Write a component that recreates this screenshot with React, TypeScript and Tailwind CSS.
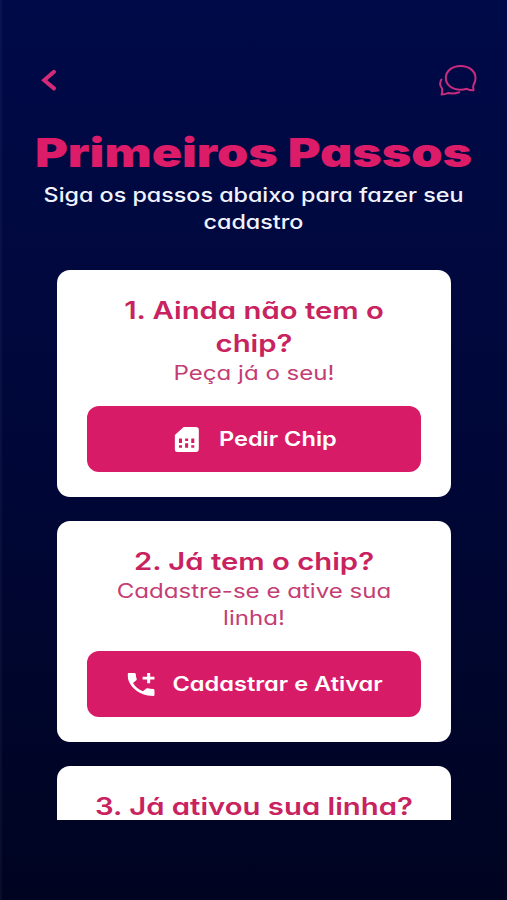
import type { ReactNode } from "react";

type Step = {
  id: number;
  title: string[];
  description?: string[];
  action?: string;
  icon?: ReactNode;
};

function BackIcon() {
  return (
    <svg width="18" height="24" viewBox="0 0 18 24" fill="none" stroke="#d42a78" strokeWidth="4">
      <path d="M15 3.8 5.2 12.2 15 20.4" strokeLinecap="round" strokeLinejoin="miter" />
    </svg>
  );
}

function ChatIcon() {
  return (
    <svg width="40" height="34" viewBox="0 0 40 34" fill="none" stroke="#c72c7e" strokeWidth="2" strokeLinecap="round" strokeLinejoin="round">
      <path d="M35.6 22.6C37 20.6 37.5 18.4 37.5 16C37.5 9 31 4 22.6 4S7.8 9 7.8 16S14.2 27.8 22.6 27.8C25 27.8 27 27.4 28.8 26.8C30.8 27.8 33 28.4 35.6 28.2C35 26.4 34.8 24.4 35.6 22.6Z" />
      <path d="M3.4 17.6C1.6 20.6 1.8 23.8 4 26.4C4.4 28.6 4.2 30.6 3.6 32.6C6 32.6 8.2 32 10 31C13.8 31.8 17.8 31.4 21.2 30.2" />
    </svg>
  );
}

// icons sit inside the stretched button label, so they are drawn narrower here
function SimIcon() {
  return (
    <svg className="mr-0.5" width="20.5" height="25" viewBox="0.5 0 24 26" preserveAspectRatio="none">
      <path fill="#fff" d="M9.5 0H21.5Q24.5 0 24.5 3V23Q24.5 26 21.5 26H3.5Q.5 26 .5 23V8.6Z" />
      <path fill="#d81b66" d="M4.8 12h3v4.6h-3zM10.9 12h3v2.6h-3zM17 12h3v4.6h-3zM4.8 19h3v2.6h-3zM10.9 17h3v4.6h-3zM17 19h3v2.6h-3z" />
    </svg>
  );
}

function AddCallIcon() {
  return (
    <svg width="23" height="23" viewBox="3 3 18 18" preserveAspectRatio="none" fill="#fff">
      <path d="M20 15.5c-1.25 0-2.45-.2-3.57-.57a1.02 1.02 0 0 0-1.02.24l-2.2 2.2a15.07 15.07 0 0 1-6.59-6.58l2.2-2.21c.28-.27.36-.66.25-1.01A11.36 11.36 0 0 1 8.5 4c0-.55-.45-1-1-1H4c-.55 0-1 .45-1 1 0 9.39 7.61 17 17 17 .55 0 1-.45 1-1v-3.5c0-.55-.45-1-1-1zM21 6h-3V3h-2v3h-3v2h3v3h2V8h3z" />
    </svg>
  );
}

const steps: Step[] = [
  {
    id: 1,
    title: ["1. Ainda não tem o", "chip?"],
    description: ["Peça já o seu!"],
    action: "Pedir Chip",
    icon: <SimIcon />,
  },
  {
    id: 2,
    title: ["2. Já tem o chip?"],
    description: ["Cadastre-se e ative sua", "linha!"],
    action: "Cadastrar e Ativar",
    icon: <AddCallIcon />,
  },
  {
    id: 3,
    title: ["3. Já ativou sua linha?"],
  },
];

function StepCard({ step }: { step: Step }) {
  return (
    <section className="shrink-0 rounded-[13px] bg-white px-[30px] pt-6 pb-[25px] text-center">
      <h2 className="scale-x-[1.22] text-2xl leading-[33px] font-semibold whitespace-nowrap text-[#c8235f]">
        {step.title.map((line) => (
          <span key={line} className="block">{line}</span>
        ))}
      </h2>
      {step.description && (
        <p className="scale-x-[1.235] text-[19.5px] leading-[27px] whitespace-nowrap text-[#c43d73]">
          {step.description.map((line) => (
            <span key={line} className="block">{line}</span>
          ))}
        </p>
      )}
      {step.action && (
        <button className="mt-[19px] flex h-[66px] w-full items-center justify-center rounded-xl bg-[#d81b66] pl-1 text-white">
          <span className="flex scale-x-[1.18] items-center gap-[15px]">
            {step.icon}
            <span className="text-[20px] font-semibold whitespace-nowrap">{step.action}</span>
          </span>
        </button>
      )}
    </section>
  );
}

export default function App() {
  return (
    <main className="flex h-[900px] w-[507px] flex-col overflow-hidden bg-linear-to-b from-[#000a48] via-[#000738] to-[#000421] font-['Inter',sans-serif] shadow-[inset_2px_0_0_#ffffff0a] [font-feature-settings:'cv11']">
      <header className="flex h-[128px] shrink-0 items-start justify-between pt-[62px] pr-[29px] pl-[39px]">
        <button aria-label="Voltar" className="mt-1.5">
          <BackIcon />
        </button>
        <button aria-label="Mensagens">
          <ChatIcon />
        </button>
      </header>

      <div className="shrink-0 text-center">
        <h1 className="scale-x-[1.252] text-[40px] leading-[49px] font-black whitespace-nowrap text-[#dc1c68]">Primeiros Passos</h1>
        <p className="mt-[5px] scale-x-[1.165] text-[20px] leading-[27px] font-medium whitespace-nowrap text-[#f0f2ff]">
          <span className="block">Siga os passos abaixo para fazer seu</span>
          <span className="block">cadastro</span>
        </p>
      </div>

      <div className="mx-auto mt-[34px] flex h-[550px] w-[394px] shrink-0 flex-col gap-6 overflow-hidden">
        {steps.map((step) => (
          <StepCard key={step.id} step={step} />
        ))}
      </div>
    </main>
  );
}
